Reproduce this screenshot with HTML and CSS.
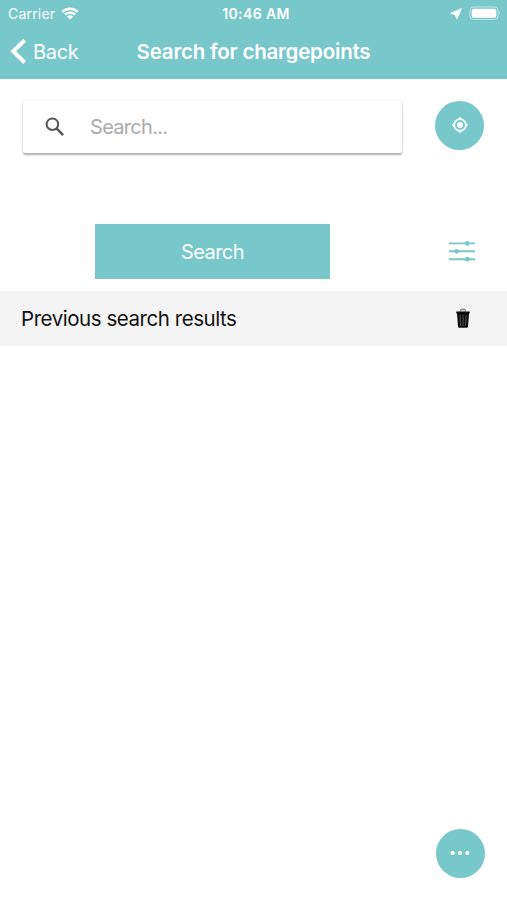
FILE: index.html
```
<!DOCTYPE html>
<html lang="en">
	<head>
		<meta charset="utf-8">
		<title>Search for chargepoints</title>
		<link rel="stylesheet" href="styles.css">
	</head>
	<body>

		<header class="top">
			<div class="status">
				<div class="status-left">
					<span class="carrier">Carrier</span>
					<svg class="wifi" width="18" height="13" viewBox="0 0 18 13">
						<path d="M1.3 4.9a11 11 0 0 1 15.4 0M4 7.7a7.2 7.2 0 0 1 10 0" fill="none" stroke="#fff" stroke-width="2.3"/>
						<path d="M9 12.6L5.9 9.5a4.4 4.4 0 0 1 6.2 0z" fill="#fff"/>
					</svg>
				</div>
				<span class="time">10:46 AM</span>
				<div class="status-right">
					<svg width="12" height="12" viewBox="0 0 12 12"><path d="M11.6 .4L6.8 11L5.3 6.7L.7 5.4z" fill="#fff" stroke="#fff" stroke-width=".8"/></svg>
					<svg width="33" height="15" viewBox="0 0 33 15">
						<rect x="1" y="1" width="28" height="12.5" rx="3.5" fill="none" stroke="#fff" stroke-opacity=".5"/>
						<rect x="2.7" y="2.7" width="24.6" height="9.1" rx="2" fill="#fff"/>
						<path d="M30.5 5.2q1.6 2 0 4z" fill="#fff" fill-opacity=".6"/>
					</svg>
				</div>
			</div>
			<nav class="nav">
				<a class="back" href="#">
					<svg width="16" height="26" viewBox="0 0 16 26"><path d="M14.6 1.3L3.2 12.3l11.4 11.2" fill="none" stroke="#fff" stroke-width="4"/></svg>
					<span>Back</span>
				</a>
				<h1 class="title">Search for chargepoints</h1>
			</nav>
		</header>

		<main>
			<div class="search-row">
				<label class="search-box">
					<svg width="20" height="20" viewBox="0 0 20 20"><circle cx="7.4" cy="7.2" r="5.8" fill="none" stroke="#555" stroke-width="2"/><path d="M11.5 11.3l6.6 6.8" fill="none" stroke="#555" stroke-width="2.5"/></svg>
					<input class="search-input" type="text" placeholder="Search...">
				</label>
				<button class="round">
					<svg class="target" width="18" height="18" viewBox="0 0 18 18"><circle cx="9" cy="9" r="5.9" fill="none" stroke="#fff" stroke-width="1.6"/><circle cx="9" cy="9" r="2.9" fill="#fff"/><path d="M9 .8l2.2 2.4H6.8zM9 17.2l2.2-2.4H6.8zM.8 9l2.4-2.2v4.4zM17.2 9l-2.4-2.2v4.4z" fill="#fff"/></svg>
				</button>
			</div>

			<div class="action-row">
				<button class="search-button">Search</button>
				<svg class="filter" width="26" height="24" viewBox="0 0 26 24">
					<path d="M0 3.4h26M0 11.3h26M0 19.2h26" stroke="#78c7cb" stroke-width="1.9"/>
					<g fill="#78c7cb"><circle cx="18.3" cy="3.4" r="2.4"/><circle cx="7.5" cy="11.3" r="2.4"/><circle cx="18.3" cy="19.2" r="2.4"/></g>
				</svg>
			</div>

			<section class="previous">
				<h2 class="previous-title">Previous search results</h2>
				<svg width="14" height="22" viewBox="0 0 14 22">
					<path d="M4 3.5a3 2.6 0 0 1 6 0" fill="#ccc" stroke="#777"/>
					<path d="M.3 3.5h13.4v2H13l-1 13q-.1 1.2-1.3 1.2H3.3Q2.1 19.7 2 18.5L1 5.5H.3z" fill="#0c0c0c"/>
					<path d="M4 6.7l.5 11M7 6.7v11M10 6.7l-.5 11" fill="none" stroke="#666" stroke-width=".8"/>
				</svg>
			</section>
		</main>

		<button class="round more">
			<svg width="20" height="6" viewBox="0 0 20 6" fill="#fff"><circle cx="2.7" cy="3" r="2.1"/><circle cx="10" cy="3" r="2.1"/><circle cx="17.3" cy="3" r="2.1"/></svg>
		</button>

	</body>
</html>
```
FILE: styles.css
```
body {
	margin: 0;
	background: white;
	color: #111;
	font-family: Inter, "Liberation Sans", sans-serif;
	font-size: 20px;
}

svg {
	display: block;
	flex: none;
}

button {
	border: none;
	padding: 0;
	background: #78c7cb;
	color: white;
	font-family: inherit;
}

.top {
	height: 79px;
	background: #78c7cb;
	color: white;
}

.status {
	display: grid;
	grid-template-columns: 1fr auto 1fr;
	align-items: center;
	height: 27px;
	padding: 0 5px 0 8px;
	font-size: 14px;
}

.status-left {
	display: flex;
	align-items: center;
	gap: 6px;
}

.carrier {
	letter-spacing: 0.2px;
}

.wifi {
	margin-bottom: 1px;
}

.time {
	padding-left: 2px;
	font-size: 14px;
	font-weight: 600;
	letter-spacing: 0.4px;
}

.status-right {
	display: flex;
	align-items: center;
	justify-content: flex-end;
	gap: 7px;
}

.nav {
	display: grid;
	grid-template-columns: 1fr auto 1fr;
	align-items: center;
	height: 50px;
	padding: 0 10px;
}

.back {
	display: flex;
	align-items: center;
	gap: 7px;
	color: white;
	text-decoration: none;
	letter-spacing: -0.3px;
}

.title {
	margin: 0 0 2px;
	font-size: 20.5px;
	font-weight: 600;
	letter-spacing: -0.2px;
}

.search-row {
	display: flex;
	justify-content: space-between;
	align-items: flex-start;
	padding: 22px 23px 0;
}

.search-box {
	display: flex;
	align-items: center;
	gap: 25px;
	box-sizing: border-box;
	width: 379px;
	height: 52px;
	padding-left: 22px;
	border-radius: 2px;
	box-shadow: 0 2px 2px rgba(0, 0, 0, 0.3), 0 0 3px rgba(0, 0, 0, 0.1);
}

.search-input {
	width: 280px;
	padding: 0;
	border: none;
	outline: none;
	background: none;
	font-family: inherit;
	font-size: 20px;
	letter-spacing: -0.7px;
}

.search-input::placeholder {
	color: #aaa;
}

.round {
	display: flex;
	align-items: center;
	justify-content: center;
	width: 49px;
	height: 49px;
	border-radius: 50%;
}

.target {
	margin-bottom: 2px;
}

.action-row {
	display: flex;
	align-items: center;
	justify-content: space-between;
	padding: 71px 32px 12px 95px;
}

.search-button {
	width: 235px;
	height: 55px;
	font-size: 20px;
	letter-spacing: -0.6px;
}

.previous {
	display: flex;
	align-items: center;
	justify-content: space-between;
	height: 55px;
	padding: 0 37px 0 21px;
	background: #f4f4f4;
}

.previous-title {
	margin: 0;
	font-size: 20.5px;
	font-weight: 400;
	letter-spacing: -0.45px;
}

.more {
	position: fixed;
	right: 22px;
	bottom: 22px;
	box-sizing: border-box;
	padding: 0 1px 2px 0;
}
```
